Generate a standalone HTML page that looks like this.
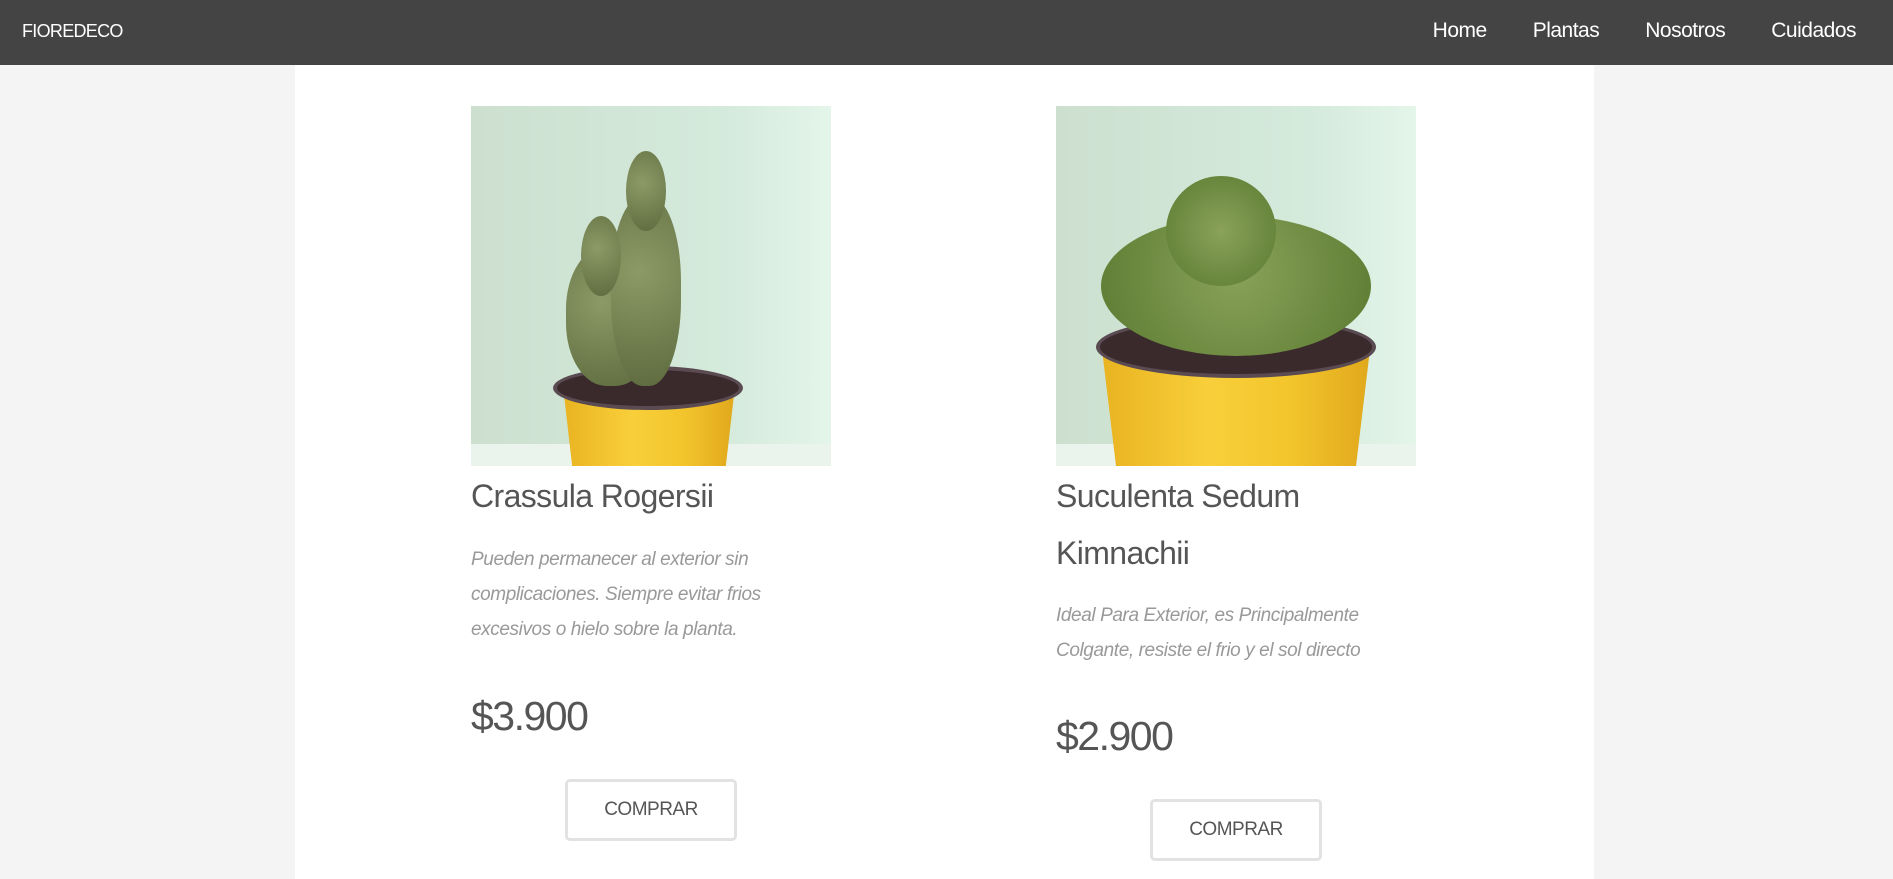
<!DOCTYPE html>
<html><head><style>
*{margin:0;padding:0;box-sizing:border-box}
body{width:1893px;height:879px;overflow:hidden;background:#f4f4f4;font-family:"Liberation Sans",sans-serif;position:relative}
.nav{position:absolute;left:0;top:0;width:1893px;height:65px;background:#444;color:#fff}
.logo{position:absolute;left:22px;top:21px;font-size:18px;letter-spacing:-0.7px}
.links{position:absolute;right:37px;top:19px;font-size:21px}
.links span{margin-left:46px;letter-spacing:-0.5px}
.main{position:absolute;left:295px;top:65px;width:1299px;height:814px;background:#fff}
.card{position:absolute;width:360px}
.img{position:absolute;left:0;top:0;width:360px;height:360px;background:linear-gradient(90deg,#cde0d0,#d4eadb 70%,#e4f5ea);overflow:hidden}
.floor{position:absolute;left:0;bottom:0;width:100%;height:22px;background:#eaf3ec}
.pot{position:absolute;background:linear-gradient(90deg,#e9b321,#f8cf3a 40%,#f3c52c 70%,#e0a81c)}
.rim{position:absolute;border-radius:50%;background:#3b2a2c;border:4px solid #5a4a52}
.leaf{position:absolute;border-radius:50%;background:radial-gradient(circle at 40% 40%,#8b9a66,#5d6a3e)}
h2{position:absolute;left:0;font-weight:normal;font-size:32px;color:#555;line-height:57px;letter-spacing:-0.6px;white-space:nowrap}
p{position:absolute;left:0;font-style:italic;font-size:19px;color:#999;line-height:35px;letter-spacing:-0.4px;white-space:nowrap}
.price{position:absolute;left:0;font-size:41px;color:#555;letter-spacing:-1.5px;line-height:48px}
.btn{position:absolute;width:172px;height:62px;border:3px solid #e2e2e2;border-radius:5px;font-size:19px;color:#555;text-align:center;line-height:56px;letter-spacing:-0.5px}
</style></head><body>
<div class="nav"><div class="logo">FIOREDECO</div><div class="links"><span>Home</span><span>Plantas</span><span>Nosotros</span><span>Cuidados</span></div></div>
<div class="main"></div>

<div class="card" style="left:471px;top:106px">
<div class="img"><div class="floor"></div>
<div class="pot" style="left:92px;top:280px;width:172px;height:90px;clip-path:polygon(0 0,100% 0,94% 100%,6% 100%)"></div>
<div class="rim" style="left:82px;top:260px;width:190px;height:44px"></div>
<div class="leaf" style="left:95px;top:140px;width:90px;height:140px;border-radius:45%"></div>
<div class="leaf" style="left:140px;top:90px;width:70px;height:190px;border-radius:45%"></div>
<div class="leaf" style="left:110px;top:110px;width:40px;height:80px"></div>
<div class="leaf" style="left:155px;top:45px;width:40px;height:80px"></div>
</div>
<h2 style="top:362px">Crassula Rogersii</h2>
<p style="top:436px">Pueden permanecer al exterior sin<br>complicaciones. Siempre evitar frios<br>excesivos o hielo sobre la planta.</p>
<div class="price" style="top:586px">$3.900</div>
<div class="btn" style="left:94px;top:673px">COMPRAR</div>
</div>

<div class="card" style="left:1056px;top:106px">
<div class="img"><div class="floor"></div>
<div class="pot" style="left:45px;top:235px;width:270px;height:135px;clip-path:polygon(0 0,100% 0,94% 100%,6% 100%)"></div>
<div class="rim" style="left:40px;top:210px;width:280px;height:62px"></div>
<div class="leaf" style="left:45px;top:110px;width:270px;height:140px;background:radial-gradient(circle at 50% 40%,#8aa25a,#5a7a30)"></div>
<div class="leaf" style="left:110px;top:70px;width:110px;height:110px;background:radial-gradient(circle,#8aa25a,#5a7a30)"></div>
</div>
<h2 style="top:362px">Suculenta Sedum<br>Kimnachii</h2>
<p style="top:492px">Ideal Para Exterior, es Principalmente<br>Colgante, resiste el frio y el sol directo</p>
<div class="price" style="top:606px">$2.900</div>
<div class="btn" style="left:94px;top:693px">COMPRAR</div>
</div>
</body></html>
